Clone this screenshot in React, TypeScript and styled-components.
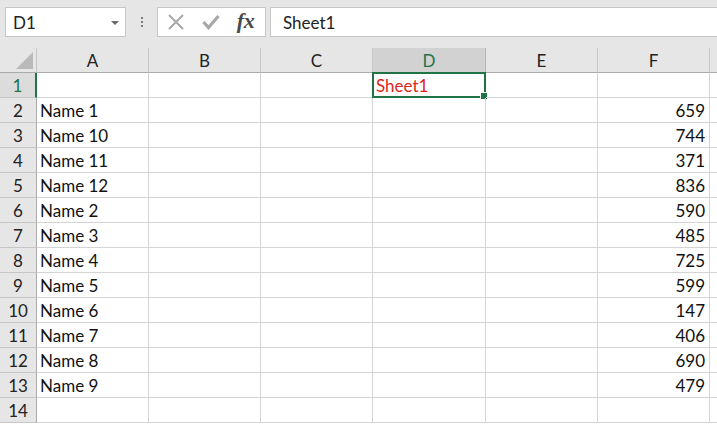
import React from 'react'
import styled, { createGlobalStyle } from 'styled-components'

const GlobalStyle = createGlobalStyle`
  html, body {
    margin: 0;
    padding: 0;
    background: #ffffff;
    overflow: hidden;
  }
  * {
    box-sizing: border-box;
  }
`

const green = '#217346'

const Page = styled.div`
  width: 717px;
  height: 424px;
  overflow: hidden;
  font-family: Lato, "Open Sans", sans-serif;
  font-size: 17px;
  color: #222;
  background: #fff;
`

const FormulaBar = styled.div`
  height: 48px;
  padding: 7px 0 11px 5px;
  background: #e6e6e6;
  display: flex;
  align-items: stretch;
`

const NameBox = styled.div`
  width: 121px;
  background: #fff;
  border: 1px solid #c6c6c6;
  display: flex;
  align-items: center;
  justify-content: space-between;
  padding: 0 6px 0 7px;
  font-size: 17px;
  color: #222;
`

const Caret = styled.span`
  width: 0;
  height: 0;
  border-left: 4px solid transparent;
  border-right: 4px solid transparent;
  border-top: 4px solid #6a6a6a;
  margin-top: 1px;
`

const Grip = styled.div`
  width: 31px;
  display: flex;
  flex-direction: column;
  align-items: center;
  justify-content: center;
  gap: 2px;
  & > span {
    width: 2px;
    height: 2px;
    background: #7a7a7a;
  }
`

const IconBox = styled.div`
  width: 109px;
  background: #fff;
  border: 1px solid #c6c6c6;
  display: flex;
  align-items: center;
`

const IconSlot = styled.div`
  width: 35px;
  display: flex;
  align-items: center;
  justify-content: center;
`

const Fx = styled.span`
  font-family: "Liberation Serif", "DejaVu Serif", serif;
  font-style: italic;
  font-weight: bold;
  font-size: 22px;
  color: #4a4a4a;
  letter-spacing: -0.5px;
  margin-top: -3px;
`

const FormulaInput = styled.div`
  flex: 1;
  margin-left: 4px;
  background: #fff;
  border: 1px solid #c6c6c6;
  border-right: none;
  display: flex;
  align-items: center;
  padding-left: 12px;
  font-size: 17px;
  color: #222;
`

const Grid = styled.div`
  display: grid;
  grid-template-columns: 37px 112px 112px 112px 113px 112px 112px 1fr;
  grid-auto-rows: 25px;
`

const Corner = styled.div`
  background: #e6e6e6;
  border-right: 1px solid #c6c6c6;
  border-bottom: 1px solid #ababab;
  position: relative;
  & > svg {
    position: absolute;
    right: 3px;
    bottom: 3px;
  }
`

const ColHead = styled.div<{ $active?: boolean }>`
  background: ${(p) => (p.$active ? '#d2d2d2' : '#e6e6e6')};
  color: ${(p) => (p.$active ? green : '#222')};
  border-right: 1px solid ${(p) => (p.$active ? '#b4b4b4' : '#c6c6c6')};
  border-bottom: 1px solid #ababab;
  display: flex;
  align-items: center;
  justify-content: center;
  padding-top: 1px;
`

const RowHead = styled.div<{ $active?: boolean }>`
  background: ${(p) => (p.$active ? '#dcdcdc' : '#e6e6e6')};
  color: ${(p) => (p.$active ? green : '#222')};
  border-right: ${(p) => (p.$active ? `2px solid ${green}` : '1px solid #ababab')};
  border-bottom: 1px solid #c6c6c6;
  display: flex;
  align-items: center;
  justify-content: center;
  padding-top: 1px;
`

const Cell = styled.div<{ $num?: boolean; $red?: boolean }>`
  position: relative;
  border-right: 1px solid #d4d4d4;
  border-bottom: 1px solid #d4d4d4;
  display: flex;
  align-items: center;
  justify-content: ${(p) => (p.$num ? 'flex-end' : 'flex-start')};
  padding: 1px 4px 0 3px;
  color: ${(p) => (p.$red ? '#e1251b' : '#111')};
  white-space: nowrap;
`

const Selection = styled.div`
  position: absolute;
  left: -1px;
  top: -1px;
  right: -1px;
  bottom: -1px;
  border: 2px solid ${green};
  pointer-events: none;
  &::after {
    content: '';
    position: absolute;
    right: -4px;
    bottom: -4px;
    width: 6px;
    height: 6px;
    background: ${green};
    border: 1px solid #fff;
  }
`

const cols = ['A', 'B', 'C', 'D', 'E', 'F', '']

const data: [string, number][] = [
  ['Name 1', 659],
  ['Name 10', 744],
  ['Name 11', 371],
  ['Name 12', 836],
  ['Name 2', 590],
  ['Name 3', 485],
  ['Name 4', 725],
  ['Name 5', 599],
  ['Name 6', 147],
  ['Name 7', 406],
  ['Name 8', 690],
  ['Name 9', 479],
]

const CrossIcon = () => (
  <svg width="18" height="18" viewBox="0 0 18 18">
    <path d="M2 2 L16 16 M16 2 L2 16" stroke="#a8a8a8" strokeWidth="2" fill="none" />
  </svg>
)

const CheckIcon = () => (
  <svg width="18" height="18" viewBox="0 0 18 18">
    <path d="M1.5 9 L6.5 14.5 L16.5 3" stroke="#a8a8a8" strokeWidth="3.2" fill="none" />
  </svg>
)

const App = (): JSX.Element => {
  const rows: (string | number)[][] = [['', '', '', 'Sheet1', '', '', '']]
  data.forEach(([n, v]) => rows.push([n, '', '', '', '', v, '']))
  rows.push(['', '', '', '', '', '', ''])

  return (
    <Page>
      <GlobalStyle />
      <FormulaBar>
        <NameBox>
          <span>D1</span>
          <Caret />
        </NameBox>
        <Grip>
          <span />
          <span />
          <span />
        </Grip>
        <IconBox>
          <IconSlot><CrossIcon /></IconSlot>
          <IconSlot><CheckIcon /></IconSlot>
          <IconSlot><Fx>fx</Fx></IconSlot>
        </IconBox>
        <FormulaInput>Sheet1</FormulaInput>
      </FormulaBar>
      <Grid>
        <Corner>
          <svg width="17" height="17" viewBox="0 0 17 17">
            <polygon points="17,0 17,17 0,17" fill="#b9b9b9" />
          </svg>
        </Corner>
        {cols.map((c, i) => (
          <ColHead key={i} $active={c === 'D'}>{c}</ColHead>
        ))}
        {rows.map((r, ri) => (
          <React.Fragment key={ri}>
            <RowHead $active={ri === 0}>{ri + 1}</RowHead>
            {r.map((v, ci) => (
              <Cell key={ci} $num={typeof v === 'number'} $red={ri === 0 && ci === 3}>
                {v}
                {ri === 0 && ci === 3 && <Selection />}
              </Cell>
            ))}
          </React.Fragment>
        ))}
      </Grid>
    </Page>
  )
}

export default App
